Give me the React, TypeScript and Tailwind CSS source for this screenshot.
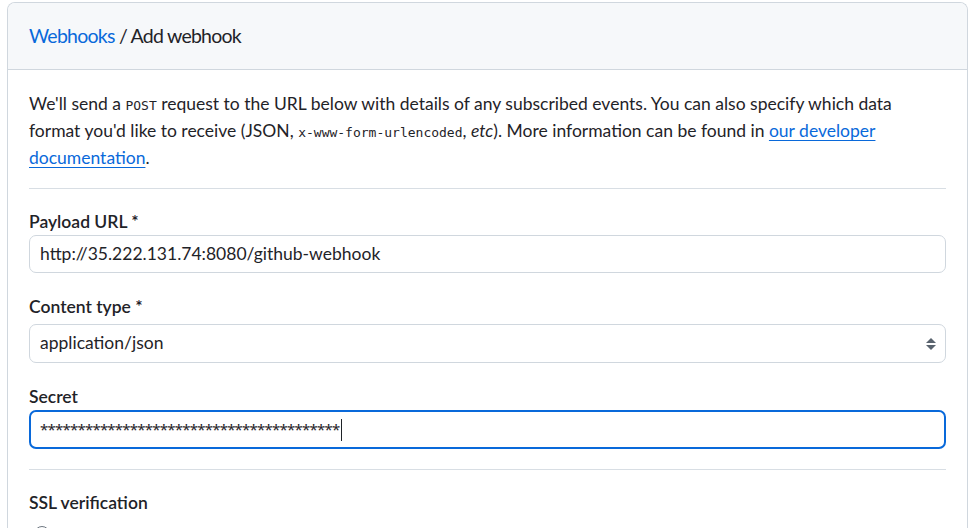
import React from "react";

const SANS = "font-['Lato','Liberation_Sans',sans-serif]";
const MONO = "font-['DejaVu_Sans_Mono','Liberation_Mono',monospace]";

function Label({ children }: { children: React.ReactNode }) {
  return (
    <div className="h-[26px] text-[17.5px] font-semibold leading-[26px] text-[#1f2328]">
      {children}
    </div>
  );
}

function SelectArrows() {
  return (
    <svg width="12" height="16" viewBox="0 0 12 16" aria-hidden="true">
      <path d="M6 2 L11 7 H1 Z" fill="#59636e" />
      <path d="M6 14 L11 9 H1 Z" fill="#59636e" />
    </svg>
  );
}

export default function App() {
  const secret = "*".repeat(40);

  return (
    <div className={`${SANS} h-[528px] overflow-hidden bg-white pt-[2px] pl-[7px] text-[#1f2328]`}>
      <div className="w-[961px] overflow-hidden rounded-t-[8px] border border-b-0 border-[#d0d7de]">
        {/* header */}
        <div className="flex h-[67px] items-center border-b border-[#d0d7de] bg-[#f6f8fa] px-[21px] text-[19.5px] leading-[30px] tracking-[-0.75px]">
          <a className="text-[#0969da]">Webhooks</a>
          <span className="whitespace-pre text-[#1f2328]"> / Add webhook</span>
        </div>

        <div className="flex flex-col px-[21px] pt-[20px] pb-[40px]">
          <p className="m-0 text-[17.5px] leading-[27px]">
            We'll send a <code className={`${MONO} text-[13px] leading-none`}>POST</code> request to the URL below
            with details of any subscribed events. You can also specify which data format you'd like to
            receive (JSON, <code className={`${MONO} text-[13px] leading-none`}>x-www-form-urlencoded</code>,{" "}
            <em>etc</em>). More information can be found in{" "}
            <a className="text-[#0969da] underline underline-offset-[3px]">our developer documentation</a>.
          </p>

          <hr className="mt-[17px] border-0 border-t border-[#d8dee4]" />

          <div className="mt-[20px]">
            <Label>Payload URL *</Label>
            <div className="flex h-[38px] items-center rounded-[7px] border border-[#d0d7de] px-[10px] text-[17.5px]">
              http://35.222.131.74:8080/github-webhook
            </div>
          </div>

          <div className="mt-[21px]">
            <Label>Content type *</Label>
            <div className="mt-[4px] flex h-[39px] items-center justify-between rounded-[7px] border border-[#d0d7de] pr-[8px] pl-[10px] text-[17.5px]">
              <span>application/json</span>
              <SelectArrows />
            </div>
          </div>

          <div className="mt-[21px]">
            <Label>Secret</Label>
            <div className="flex h-[39px] items-center rounded-[7px] border-2 border-[#0969da] px-[9px]">
              <span className="font-['Noto_Sans',sans-serif] text-[15px] tracking-[-0.78px]">{secret}</span>
              <span className="ml-[2px] inline-block h-[22px] w-px bg-[#1f2328]" />
            </div>
          </div>

          <hr className="mt-[20px] border-0 border-t border-[#d8dee4]" />

          <div className="mt-[20px]">
            <Label>SSL verification</Label>
            <div className="mt-[10px] flex items-center gap-2">
              <span className="ml-[5px] inline-block h-[16px] w-[16px] rounded-full border border-[#6e7781]" />
            </div>
          </div>
        </div>
      </div>
    </div>
  );
}
